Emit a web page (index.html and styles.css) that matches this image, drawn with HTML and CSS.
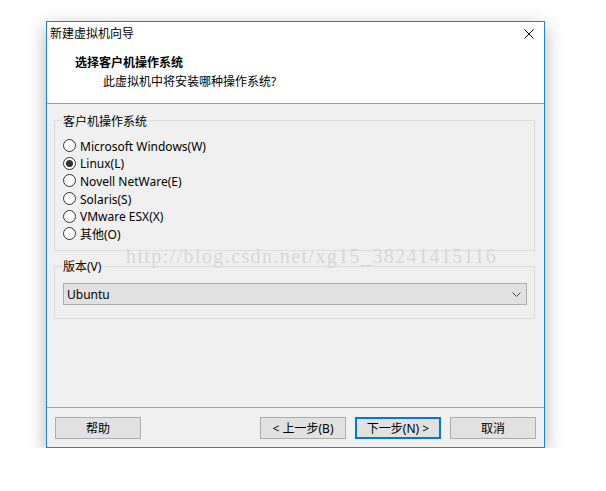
FILE: index.html
```html
<!DOCTYPE html>
<html>
<head>
<meta charset="utf-8">
<link rel="stylesheet" href="styles.css">
</head>
<body>
<div class="window">
  <div class="titlebar">
    <span class="title">新建虚拟机向导</span>
    <svg class="close" width="10" height="10" viewBox="0 0 10 10"><path d="M0.5 0.5 L9.5 9.5 M9.5 0.5 L0.5 9.5" stroke="#000" stroke-width="1" fill="none"/></svg>
  </div>
  <div class="header">
    <div class="heading">选择客户机操作系统</div>
    <div class="subheading">此虚拟机中将安装哪种操作系统?</div>
  </div>
  <div class="content">
    <fieldset class="group group-os">
      <legend><span class="legend-text">客户机操作系统</span></legend>
      <div class="radio"><span class="dot"></span><span class="label">Microsoft Windows(W)</span></div>
      <div class="radio"><span class="dot checked"></span><span class="label">Linux(L)</span></div>
      <div class="radio"><span class="dot"></span><span class="label">Novell NetWare(E)</span></div>
      <div class="radio"><span class="dot"></span><span class="label">Solaris(S)</span></div>
      <div class="radio"><span class="dot"></span><span class="label">VMware ESX(X)</span></div>
      <div class="radio"><span class="dot"></span><span class="label">其他(O)</span></div>
    </fieldset>
    <fieldset class="group group-ver">
      <legend><span class="legend-text">版本(V)</span></legend>
      <div class="select">
        <span class="label">Ubuntu</span>
        <svg width="9" height="6" viewBox="0 0 9 6"><polyline points="0.5,0.5 4.5,4.5 8.5,0.5" stroke="#444" stroke-width="1" fill="none"/></svg>
      </div>
    </fieldset>
  </div>
  <div class="footer">
    <button class="btn">帮助</button>
    <div class="spacer"></div>
    <button class="btn">&lt; 上一步(B)</button>
    <button class="btn btn-default">下一步(N) &gt;</button>
    <button class="btn">取消</button>
  </div>
  <div class="watermark">http://blog.csdn.net/xg15_38241415116</div>
</div>
</body>
</html>
```
FILE: styles.css
```css
html, body {
  margin: 0;
  padding: 0;
  background: #ffffff;
}
body {
  padding: 21px 0 0 46px;
  font-family: "Noto Sans", "Noto Sans CJK SC", sans-serif;
  font-size: 12px;
  color: #000;
}
.window {
  position: relative;
  box-sizing: border-box;
  width: 499px;
  height: 427px;
  border: 1px solid #1883d7;
  background: #f0f0f0;
  box-shadow: 0 6px 18px rgba(0, 0, 0, 0.3);
  display: flex;
  flex-direction: column;
}
.titlebar {
  height: 23px;
  background: #fff;
  display: flex;
  align-items: center;
  justify-content: space-between;
  padding: 0 10px 0 3px;
}
.title {
  line-height: 16px;
  padding-top: 2px;
}
.close {
  display: block;
  margin-top: 1px;
}
.header {
  background: #fff;
  padding: 10px 0 13px 28px;
  border-bottom: 1px solid #a0a0a0;
}
.heading {
  font-weight: bold;
  line-height: 16px;
}
.subheading {
  line-height: 16px;
  margin-top: 3px;
  padding-left: 28px;
}
.content {
  height: 304px;
  box-sizing: border-box;
  padding: 9px 9px 0 7px;
  display: flex;
  flex-direction: column;
  gap: 7px;
}
.group {
  margin: 0;
  min-width: 0;
  border: 1px solid #dcdcdc;
  padding: 0 7px 0 8px;
}
.group legend {
  padding: 0 1px;
  margin-left: -1px;
  line-height: 16px;
}
.legend-text {
  display: inline-block;
  transform: translateY(1px);
}
.group-os {
  padding-top: 8px;
  padding-bottom: 8px;
}
.group-ver {
  padding-top: 9px;
  padding-bottom: 13px;
}
.radio {
  height: 17.6px;
  display: flex;
  align-items: center;
  gap: 4px;
  line-height: 16px;
}
.label {
  padding-top: 2px;
}
.dot {
  box-sizing: border-box;
  width: 13px;
  height: 13px;
  border: 1px solid #333;
  border-radius: 50%;
  background: #fff;
  display: flex;
  align-items: center;
  justify-content: center;
  flex: none;
}
.dot.checked::after {
  content: "";
  width: 7px;
  height: 7px;
  border-radius: 50%;
  background: #333;
}
.select {
  box-sizing: border-box;
  height: 22px;
  border: 1px solid #adadad;
  background: #e1e1e1;
  display: flex;
  align-items: center;
  justify-content: space-between;
  padding: 0 5px 0 3px;
  line-height: 16px;
}
.select svg {
  display: block;
  margin-top: 1px;
}
.footer {
  border-top: 1px solid #a0a0a0;
  padding: 9px 8px 8px 8px;
  display: flex;
  gap: 9px;
}
.spacer {
  flex: 1;
}
.btn {
  box-sizing: border-box;
  width: 86px;
  height: 22px;
  margin: 0;
  padding: 2px 0 0 0;
  border: 1px solid #adadad;
  background: #e1e1e1;
  font: inherit;
  color: #000;
  line-height: 16px;
}
.btn-default {
  border: 2px solid #0078d7;
}
.watermark {
  position: absolute;
  left: 79px;
  top: 224px;
  font-family: "Liberation Serif", serif;
  font-size: 20px;
  line-height: 20px;
  letter-spacing: 1.4px;
  color: #d6d6d6;
  white-space: nowrap;
  pointer-events: none;
}
```
